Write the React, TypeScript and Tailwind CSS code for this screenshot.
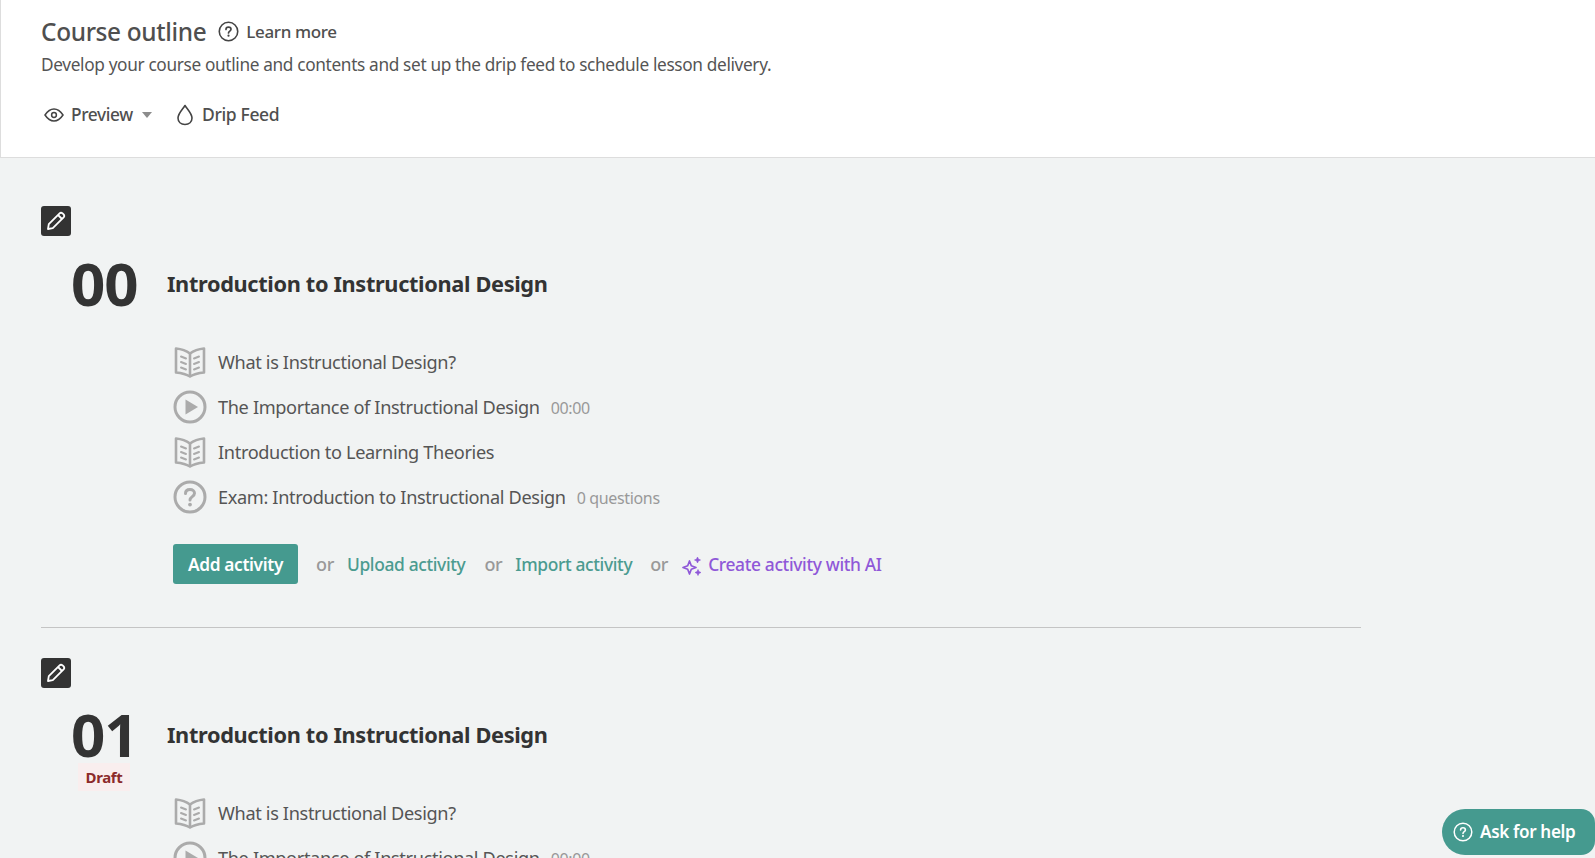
import React from "react";

const BookIcon = () => (
  <svg width="32" height="32" viewBox="0 0 32 32" fill="none" stroke="#ababab" strokeWidth="2.6" strokeLinejoin="round" strokeLinecap="round">
    <path d="M2 2.5 C7 3 12 4.5 16 7.5 C20 4.5 25 3 30 2.5 V26.5 C25 27 20 28 16 30.5 C12 28 7 27 2 26.5 Z" />
    <path d="M16 7.5 V30" />
    <path d="M7 10.5 L12 12.5 M7 16 L12 18 M7 21.5 L12 23.5 M20 12.5 L25 10.5 M20 18 L25 16 M20 23.5 L25 21.5" strokeWidth="2" />
  </svg>
);

const PlayIcon = () => (
  <svg width="34" height="34" viewBox="0 0 34 34" fill="none">
    <circle cx="17" cy="17" r="15" stroke="#ababab" strokeWidth="3" />
    <path d="M12.5 9.5 L25 17 L12.5 24.5 Z" fill="#ababab" />
  </svg>
);

const QuestionIcon = () => (
  <svg width="34" height="34" viewBox="0 0 34 34" fill="none">
    <circle cx="17" cy="17" r="15" stroke="#ababab" strokeWidth="3" />
    <path d="M12.5 13.5 C12.5 10.8 14.5 9.5 17 9.5 C19.6 9.5 21.5 11 21.5 13.3 C21.5 16.6 17 16.6 17 20" stroke="#ababab" strokeWidth="3" strokeLinecap="round" />
    <circle cx="17" cy="24.6" r="1.9" fill="#ababab" />
  </svg>
);

const SmallHelp = ({ color, size }: { color: string; size: number }) => (
  <svg width={size} height={size} viewBox="0 0 20 20" fill="none">
    <circle cx="10" cy="10" r="8.8" stroke={color} strokeWidth="1.5" />
    <path d="M7.6 8 C7.6 6.6 8.6 5.8 10 5.8 C11.4 5.8 12.4 6.6 12.4 7.9 C12.4 9.6 10 9.6 10 11.4" stroke={color} strokeWidth="1.6" strokeLinecap="round" />
    <circle cx="10" cy="14" r="1.05" fill={color} />
  </svg>
);

const Pencil = () => (
  <button className="flex h-[30px] w-[30px] items-center justify-center rounded-[3px] bg-[#333333]">
    <svg width="20" height="20" viewBox="0 0 20 20" fill="none" stroke="#ffffff" strokeWidth="1.8" strokeLinejoin="round">
      <path d="M2 18 L2.8 13.2 L13.6 2.4 C14.4 1.6 15.6 1.6 16.6 2.4 L17.6 3.4 C18.4 4.4 18.4 5.6 17.6 6.4 L6.8 17.2 Z" />
      <path d="M12 4 L16 8" />
    </svg>
  </button>
);

const Row = ({ icon, text, note }: { icon: React.ReactNode; text: string; note?: string }) => (
  <div className="flex h-[45px] items-center">
    <div className="flex w-[34px] items-center justify-center">{icon}</div>
    <span className="ml-[11px] pt-[2px] text-[18.17px] text-[#555555]">{text}</span>
    {note && <span className="ml-[11px] mt-[2px] text-[16px] text-[#999999]">{note}</span>}
  </div>
);

const Or = () => <span className="text-[18px] font-medium text-[#999999]">or</span>;

export default function App() {
  return (
    <div className="relative flex h-[858px] w-full flex-col overflow-hidden bg-[#f1f3f3] font-['Noto_Sans','Open_Sans',sans-serif] tracking-[-0.35px]">
      <header className="h-[158px] shrink-0 border-b border-l border-[#dddddd] bg-white pl-[40px] pt-[14px]">
        <div className="flex h-[36px] items-center">
          <h1 className="text-[24.4px] font-medium text-[#4f4f4f]">Course outline</h1>
          <span className="ml-[12px] -mt-[2px]"><SmallHelp color="#444444" size={21} /></span>
          <span className="ml-[7px] text-[17px] font-medium text-[#4f4f4f] -mt-[1px]">Learn more</span>
        </div>
        <p className="mt-[1px] h-[28px] text-[17.25px] leading-[28px] text-[#555555]">
          Develop your course outline and contents and set up the drip feed to schedule lesson delivery.
        </p>
        <div className="mt-[21px] flex h-[30px] items-center">
          <svg className="ml-[3px]" width="20" height="14" viewBox="0 0 20 14" fill="none" stroke="#444444" strokeWidth="1.5">
            <path d="M1 7 C4 2.5 7 1 10 1 C13 1 16 2.5 19 7 C16 11.5 13 13 10 13 C7 13 4 11.5 1 7 Z" />
            <circle cx="10" cy="7" r="2.4" />
          </svg>
          <span className="ml-[7px] -mt-[1px] text-[17.3px] font-medium text-[#4f4f4f]">Preview</span>
          <svg className="ml-[9px]" width="10" height="6" viewBox="0 0 10 6"><path d="M0 0 H10 L5 6 Z" fill="#8c8c8c" /></svg>
          <svg className="ml-[24px]" width="18" height="22" viewBox="0 0 18 22" fill="none" stroke="#444444" strokeWidth="1.6" strokeLinejoin="round">
            <path d="M9 1.5 C11.5 5.5 16 9.5 16 14 C16 18 13 20.5 9 20.5 C5 20.5 2 18 2 14 C2 9.5 6.5 5.5 9 1.5 Z" />
          </svg>
          <span className="ml-[8px] -mt-[1px] text-[17.5px] font-medium text-[#4f4f4f]">Drip Feed</span>
        </div>
      </header>

      <main className="pl-[41px] pt-[48px]">
        <section className="h-[422px] w-[1320px] border-b border-[#c4c4c4]">
          <Pencil />
          <div className="mt-[12px] flex h-[70px] items-center">
            <div className="w-[126px] pl-[30px] text-[60px] font-bold leading-none tracking-[-1px] text-[#333333]">00</div>
            <h2 className="pt-[3px] text-[21.75px] font-bold text-[#333333]">Introduction to Instructional Design</h2>
          </div>
          <div className="mt-[21px] pl-[132px]">
            <Row icon={<BookIcon />} text="What is Instructional Design?" />
            <Row icon={<PlayIcon />} text="The Importance of Instructional Design" note="00:00" />
            <Row icon={<BookIcon />} text="Introduction to Learning Theories" />
            <Row icon={<QuestionIcon />} text="Exam: Introduction to Instructional Design" note="0 questions" />
            <div className="mt-[25px] flex items-center">
              <button className="h-[40px] w-[125px] rounded-[3px] bg-[#459a8f] pt-[2px] text-[17.3px] font-semibold text-white">Add activity</button>
              <span className="ml-[18px]"><Or /></span>
              <a className="ml-[13px] text-[17.4px] font-medium text-[#4b9b90]">Upload activity</a>
              <span className="ml-[19px]"><Or /></span>
              <a className="ml-[13px] text-[17.4px] font-medium text-[#4b9b90]">Import activity</a>
              <span className="ml-[18px]"><Or /></span>
              <svg className="ml-[14px] mt-[3px]" width="21" height="20" viewBox="0 0 21 20" fill="none" stroke="#8f58d8" strokeWidth="1.7" strokeLinejoin="round">
                <path d="M7.5 5 L9.3 9.7 L14 11.5 L9.3 13.3 L7.5 18 L5.7 13.3 L1 11.5 L5.7 9.7 Z" />
                <path d="M15.5 1 L16.4 3.1 L18.5 4 L16.4 4.9 L15.5 7 L14.6 4.9 L12.5 4 L14.6 3.1 Z" fill="#8f58d8" strokeWidth="0.6" />
                <path d="M16 13.5 L16.9 15.6 L19 16.5 L16.9 17.4 L16 19.5 L15.1 17.4 L13 16.5 L15.1 15.6 Z" fill="#8f58d8" strokeWidth="0.6" />
              </svg>
              <a className="ml-[5px] text-[17.4px] font-medium text-[#8f58d8]">Create activity with AI</a>
            </div>
          </div>
        </section>

        <section className="pt-[30px]">
          <Pencil />
          <div className="mt-[11px] flex h-[70px] items-center">
            <div className="w-[126px] pl-[30px] text-[60px] font-bold leading-none tracking-[-1px] text-[#333333]">01</div>
            <h2 className="pt-[3px] text-[21.75px] font-bold text-[#333333]">Introduction to Instructional Design</h2>
          </div>
          <div className="ml-[37px] flex h-[28px] w-[52px] -mt-[6px] items-center justify-center bg-[#f9eeee] text-[15px] font-bold text-[#8c2b2b]">Draft</div>
          <div className="-mt-[1px] pl-[132px]">
            <Row icon={<BookIcon />} text="What is Instructional Design?" />
            <Row icon={<PlayIcon />} text="The Importance of Instructional Design" note="00:00" />
          </div>
        </section>
      </main>

      <button className="absolute bottom-[3px] right-0 flex h-[46px] w-[153px] items-center rounded-l-[23px] rounded-r-[14px] bg-[#459a8f] pl-[11px] text-[17.1px] font-semibold text-white">
        <SmallHelp color="#ffffff" size={20} />
        <span className="ml-[7px]">Ask for help</span>
      </button>
    </div>
  );
}
